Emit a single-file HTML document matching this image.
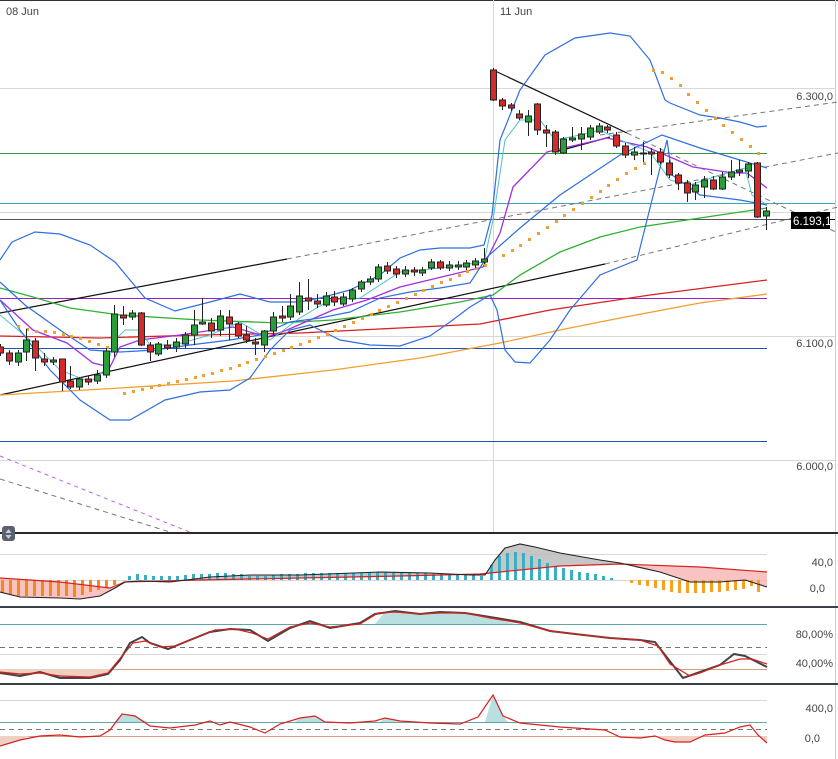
<!DOCTYPE html>
<html><head><meta charset="utf-8"><style>
html,body{margin:0;padding:0;background:#fff;}
svg{display:block;}
text{font-family:"Liberation Sans",sans-serif;font-size:11px;fill:#444;}
</style></head><body>
<svg width="838" height="759" viewBox="0 0 838 759" xmlns="http://www.w3.org/2000/svg">
<rect width="838" height="759" fill="#fff"/>
<line x1="0" y1="0.5" x2="838" y2="0.5" stroke="#333" stroke-width="1"/>
<line x1="835.5" y1="0" x2="835.5" y2="759" stroke="#ccc"/>
<!-- grid -->
<g stroke="#d8d8d8" stroke-width="1">
<line x1="0" y1="88.5" x2="835" y2="88.5"/>
<line x1="0" y1="212.5" x2="835" y2="212.5"/>
<line x1="0" y1="336.5" x2="835" y2="336.5"/>
<line x1="0" y1="460.5" x2="835" y2="460.5"/>
<line x1="493.5" y1="0" x2="493.5" y2="532"/>
</g>
<text x="6" y="15">08 Jun</text>
<text x="500" y="15">11 Jun</text>
<!-- horizontal lines -->
<line x1="0" y1="153.5" x2="767" y2="153.5" stroke="#2c9c3c"/>
<line x1="0" y1="203.5" x2="835" y2="203.5" stroke="#3aa8b0"/>
<line x1="0" y1="219.5" x2="835" y2="219.5" stroke="#555"/>
<line x1="0" y1="298.5" x2="767" y2="298.5" stroke="#9a1fd0"/>
<line x1="0" y1="348.5" x2="767" y2="348.5" stroke="#1f50c0"/>
<line x1="0" y1="441.5" x2="767" y2="441.5" stroke="#1f50c0"/>
<!-- dashed lines -->
<g stroke="#777" stroke-dasharray="5,4" fill="none">
<line x1="287" y1="259" x2="838" y2="153"/>
<line x1="605" y1="264" x2="838" y2="207"/>
<line x1="600" y1="135" x2="838" y2="102"/>
<line x1="627" y1="133" x2="838" y2="233"/>
<line x1="0" y1="479" x2="173" y2="533"/>
</g>
<line x1="0" y1="456" x2="192" y2="533" stroke="#c060e0" stroke-dasharray="4,4"/>
<!-- trend lines -->
<g stroke="#111" stroke-width="1.2" fill="none">
<line x1="0" y1="313" x2="287" y2="259"/>
<line x1="0" y1="395" x2="605" y2="264"/>
<line x1="493" y1="70" x2="627" y2="133"/>
<line x1="555" y1="152" x2="610" y2="137"/>
</g>
<!-- MAs -->
<g fill="none" stroke-width="1.3">
<polyline stroke="#f0a030" points="0,395 120,388 233,381 333,370 420,358 500,343 560,330 620,318 700,303 767,294"/>
<polyline stroke="#d82020" points="0,336 100,338 200,335 300,333 400,328 480,324 550,310 650,295 767,280"/>
<polyline stroke="#30b030" points="0,288 33,297 70,308 120,315 200,320 280,323 333,320 400,312 460,302 493,295 520,275 560,252 600,237 640,227 700,218 767,208"/>
<polyline stroke="#a030e0" points="0,300 33,330 67,343 93,363 110,367 120,347 140,340 180,335 233,327 267,337 287,330 333,310 367,300 400,287 450,275 483,267 500,233 513,187 547,152 607,138 647,147 693,167 733,173 747,173 767,188"/>
<polyline stroke="#50c0c8" stroke-width="1" points="0,315 30,340 60,370 90,382 105,370 115,340 125,330 140,330 150,345 175,345 210,335 240,322 270,340 300,318 330,300 360,298 400,272 440,268 484,262 493,220 505,140 520,120 540,120 555,140 580,135 600,130 620,140 650,152 670,180 690,185 720,175 745,168 752,195 767,205"/>
</g>
<g fill="none" stroke="#2f6fe0" stroke-width="1.2">
<polyline points="0,260 12,242 35,232 60,234 90,245 115,262 145,298 175,311 210,302 240,294 270,302 300,302 320,298 350,290 380,275 400,258 420,250 440,248 470,248 484,245 492,215 500,140 520,90 545,55 575,38 610,33 630,36 650,60 665,100 670,103 700,115 720,118 740,122 757,127 767,126"/>
<polyline points="0,282 25,305 60,330 90,350 120,352 155,350 190,345 230,340 260,335 290,322 320,318 350,312 380,298 410,292 440,288 470,283 487,257 520,228 560,195 620,155 662,135 700,148 740,160 767,168"/>
<polyline points="0,300 20,330 50,370 80,400 110,420 130,420 165,400 200,392 230,390 250,378 270,350 290,330 310,325 340,340 370,345 400,346 430,336 450,322 470,307 490,295 497,310 505,350 515,362 530,363 550,340 570,310 600,275 637,260 667,140 672,175 700,195 740,200 767,205"/>
</g>
<!-- SAR dots -->
<g fill="#f0a030">
<rect x="17" y="325" width="3" height="3"/><rect x="26" y="328" width="3" height="3"/><rect x="35" y="330" width="3" height="3"/><rect x="44" y="330" width="3" height="3"/><rect x="53" y="331" width="3" height="3"/><rect x="62" y="333" width="3" height="3"/><rect x="70" y="335" width="3" height="3"/><rect x="79" y="337" width="3" height="3"/><rect x="88" y="340" width="3" height="3"/><rect x="97" y="343" width="3" height="3"/><rect x="106" y="346" width="3" height="3"/>
<rect x="123" y="392" width="3" height="3"/><rect x="132" y="390" width="3" height="3"/><rect x="141" y="388" width="3" height="3"/><rect x="150" y="386" width="3" height="3"/><rect x="158" y="384" width="3" height="3"/><rect x="167" y="382" width="3" height="3"/><rect x="176" y="380" width="3" height="3"/><rect x="185" y="378" width="3" height="3"/><rect x="194" y="376" width="3" height="3"/><rect x="202" y="374" width="3" height="3"/><rect x="211" y="372" width="3" height="3"/><rect x="220" y="369" width="3" height="3"/><rect x="229" y="367" width="3" height="3"/><rect x="238" y="364" width="3" height="3"/><rect x="246" y="361" width="3" height="3"/><rect x="255" y="358" width="3" height="3"/><rect x="264" y="355" width="3" height="3"/><rect x="273" y="352" width="3" height="3"/><rect x="282" y="349" width="3" height="3"/><rect x="290" y="346" width="3" height="3"/><rect x="299" y="343" width="3" height="3"/><rect x="308" y="340" width="3" height="3"/><rect x="317" y="336" width="3" height="3"/><rect x="326" y="333" width="3" height="3"/><rect x="334" y="329" width="3" height="3"/><rect x="343" y="325" width="3" height="3"/><rect x="352" y="321" width="3" height="3"/><rect x="361" y="317" width="3" height="3"/><rect x="370" y="313" width="3" height="3"/><rect x="378" y="309" width="3" height="3"/><rect x="387" y="305" width="3" height="3"/><rect x="396" y="301" width="3" height="3"/><rect x="405" y="297" width="3" height="3"/><rect x="414" y="293" width="3" height="3"/><rect x="422" y="289" width="3" height="3"/><rect x="431" y="285" width="3" height="3"/><rect x="440" y="281" width="3" height="3"/><rect x="449" y="278" width="3" height="3"/><rect x="458" y="274" width="3" height="3"/><rect x="466" y="270" width="3" height="3"/><rect x="475" y="267" width="3" height="3"/><rect x="484" y="264" width="3" height="3"/>
<rect x="502" y="254" width="3" height="3"/><rect x="511" y="249" width="3" height="3"/><rect x="519" y="244" width="3" height="3"/><rect x="528" y="238" width="3" height="3"/><rect x="537" y="232" width="3" height="3"/><rect x="546" y="226" width="3" height="3"/><rect x="555" y="220" width="3" height="3"/><rect x="563" y="214" width="3" height="3"/><rect x="572" y="208" width="3" height="3"/><rect x="581" y="202" width="3" height="3"/><rect x="590" y="196" width="3" height="3"/><rect x="599" y="190" width="3" height="3"/><rect x="607" y="184" width="3" height="3"/><rect x="616" y="178" width="3" height="3"/><rect x="625" y="172" width="3" height="3"/><rect x="634" y="167" width="3" height="3"/><rect x="643" y="162" width="3" height="3"/>
<rect x="652" y="69" width="3" height="3"/><rect x="661" y="71" width="3" height="3"/><rect x="670" y="77" width="3" height="3"/><rect x="679" y="84" width="3" height="3"/><rect x="687" y="93" width="3" height="3"/><rect x="696" y="101" width="3" height="3"/><rect x="705" y="109" width="3" height="3"/><rect x="714" y="117" width="3" height="3"/><rect x="722" y="124" width="3" height="3"/><rect x="731" y="131" width="3" height="3"/><rect x="740" y="138" width="3" height="3"/><rect x="749" y="145" width="3" height="3"/><rect x="757" y="152" width="3" height="3"/>
</g>
<!-- candles -->
<g stroke="#222" stroke-width="1">
<g id="c">
<line x1="0.5" y1="344" x2="0.5" y2="356"/><rect x="-2.5" y="347" width="6" height="6" fill="#d42a2a"/>
<line x1="9.5" y1="350" x2="9.5" y2="365"/><rect x="6.5" y="353" width="6" height="8" fill="#d42a2a"/>
<line x1="18.5" y1="350" x2="18.5" y2="366"/><rect x="15.5" y="353" width="6" height="9" fill="#2a9d3a"/>
<line x1="26.5" y1="329" x2="26.5" y2="361"/><rect x="23.5" y="340" width="6" height="12" fill="#2a9d3a"/>
<line x1="35.5" y1="338" x2="35.5" y2="371"/><rect x="32.5" y="341" width="6" height="17" fill="#d42a2a"/>
<line x1="44.5" y1="353" x2="44.5" y2="366"/><rect x="41.5" y="359" width="6" height="3" fill="#d42a2a"/>
<line x1="53.5" y1="357" x2="53.5" y2="365"/><rect x="50.5" y="360" width="6" height="2" fill="#2a9d3a"/>
<line x1="62.5" y1="359" x2="62.5" y2="391"/><rect x="59.5" y="359" width="6" height="23" fill="#d42a2a"/>
<line x1="70.5" y1="366" x2="70.5" y2="389"/><rect x="67.5" y="381" width="6" height="6" fill="#d42a2a"/>
<line x1="79.5" y1="377" x2="79.5" y2="390"/><rect x="76.5" y="379" width="6" height="8" fill="#2a9d3a"/>
<line x1="88.5" y1="376" x2="88.5" y2="385"/><rect x="85.5" y="379" width="6" height="3" fill="#d42a2a"/>
<line x1="97.5" y1="370" x2="97.5" y2="384"/><rect x="94.5" y="375" width="6" height="6" fill="#2a9d3a"/>
<line x1="106.5" y1="348" x2="106.5" y2="378"/><rect x="103.5" y="351" width="6" height="24" fill="#2a9d3a"/>
<line x1="114.5" y1="305" x2="114.5" y2="357"/><rect x="111.5" y="314" width="6" height="38" fill="#2a9d3a"/>
<line x1="123.5" y1="306" x2="123.5" y2="325"/><rect x="120.5" y="315" width="6" height="3" fill="#d42a2a"/>
<line x1="132.5" y1="310" x2="132.5" y2="320"/><rect x="129.5" y="313" width="6" height="4" fill="#2a9d3a"/>
<line x1="141.5" y1="312" x2="141.5" y2="346"/><rect x="138.5" y="313" width="6" height="32" fill="#d42a2a"/>
<line x1="150.5" y1="342" x2="150.5" y2="361"/><rect x="147.5" y="345" width="6" height="7" fill="#d42a2a"/>
<line x1="158.5" y1="342" x2="158.5" y2="356"/><rect x="155.5" y="344" width="6" height="10" fill="#2a9d3a"/>
<line x1="167.5" y1="340" x2="167.5" y2="350"/><rect x="164.5" y="345" width="6" height="3" fill="#d42a2a"/>
<line x1="176.5" y1="338" x2="176.5" y2="352"/><rect x="173.5" y="342" width="6" height="5" fill="#2a9d3a"/>
<line x1="185.5" y1="332" x2="185.5" y2="348"/><rect x="182.5" y="335" width="6" height="9" fill="#2a9d3a"/>
<line x1="194.5" y1="310" x2="194.5" y2="345"/><rect x="191.5" y="325" width="6" height="10" fill="#2a9d3a"/>
<line x1="202.5" y1="298" x2="202.5" y2="325"/><rect x="199.5" y="322" width="6" height="2" fill="#2a9d3a"/>
<line x1="211.5" y1="318" x2="211.5" y2="338"/><rect x="208.5" y="323" width="6" height="8" fill="#d42a2a"/>
<line x1="220.5" y1="310" x2="220.5" y2="336"/><rect x="217.5" y="316" width="6" height="14" fill="#2a9d3a"/>
<line x1="229.5" y1="310" x2="229.5" y2="340"/><rect x="226.5" y="317" width="6" height="7" fill="#d42a2a"/>
<line x1="238.5" y1="322" x2="238.5" y2="338"/><rect x="235.5" y="324" width="6" height="12" fill="#d42a2a"/>
<line x1="246.5" y1="326" x2="246.5" y2="343"/><rect x="243.5" y="335" width="6" height="5" fill="#d42a2a"/>
<line x1="255.5" y1="338" x2="255.5" y2="355"/><rect x="252.5" y="342" width="6" height="2" fill="#d42a2a"/>
<line x1="264.5" y1="330" x2="264.5" y2="352"/><rect x="261.5" y="331" width="6" height="14" fill="#2a9d3a"/>
<line x1="273.5" y1="312" x2="273.5" y2="335"/><rect x="270.5" y="317" width="6" height="14" fill="#2a9d3a"/>
<line x1="282.5" y1="306" x2="282.5" y2="322"/><rect x="279.5" y="316" width="6" height="2" fill="#d42a2a"/>
<line x1="290.5" y1="294" x2="290.5" y2="320"/><rect x="287.5" y="306" width="6" height="11" fill="#2a9d3a"/>
<line x1="299.5" y1="282" x2="299.5" y2="315"/><rect x="296.5" y="296" width="6" height="16" fill="#2a9d3a"/>
<line x1="308.5" y1="279" x2="308.5" y2="310"/><rect x="305.5" y="298" width="6" height="3" fill="#d42a2a"/>
<line x1="317.5" y1="294" x2="317.5" y2="308"/><rect x="314.5" y="301" width="6" height="3" fill="#d42a2a"/>
<line x1="326.5" y1="292" x2="326.5" y2="307"/><rect x="323.5" y="296" width="6" height="9" fill="#2a9d3a"/>
<line x1="334.5" y1="291" x2="334.5" y2="306"/><rect x="331.5" y="297" width="6" height="5" fill="#d42a2a"/>
<line x1="343.5" y1="293" x2="343.5" y2="306"/><rect x="340.5" y="297" width="6" height="7" fill="#2a9d3a"/>
<line x1="352.5" y1="288" x2="352.5" y2="302"/><rect x="349.5" y="290" width="6" height="9" fill="#2a9d3a"/>
<line x1="361.5" y1="280" x2="361.5" y2="292"/><rect x="358.5" y="282" width="6" height="7" fill="#2a9d3a"/>
<line x1="370.5" y1="276" x2="370.5" y2="285"/><rect x="367.5" y="279" width="6" height="3" fill="#2a9d3a"/>
<line x1="378.5" y1="264" x2="378.5" y2="282"/><rect x="375.5" y="267" width="6" height="12" fill="#2a9d3a"/>
<line x1="387.5" y1="262" x2="387.5" y2="274"/><rect x="384.5" y="266" width="6" height="5" fill="#d42a2a"/>
<line x1="396.5" y1="266" x2="396.5" y2="278"/><rect x="393.5" y="269" width="6" height="5" fill="#d42a2a"/>
<line x1="405.5" y1="266" x2="405.5" y2="277"/><rect x="402.5" y="270" width="6" height="4" fill="#2a9d3a"/>
<line x1="414.5" y1="267" x2="414.5" y2="276"/><rect x="411.5" y="270" width="6" height="2" fill="#d42a2a"/>
<line x1="422.5" y1="267" x2="422.5" y2="276"/><rect x="419.5" y="270" width="6" height="3" fill="#2a9d3a"/>
<line x1="431.5" y1="259" x2="431.5" y2="270"/><rect x="428.5" y="262" width="6" height="6" fill="#2a9d3a"/>
<line x1="440.5" y1="260" x2="440.5" y2="270"/><rect x="437.5" y="262" width="6" height="6" fill="#d42a2a"/>
<line x1="449.5" y1="261" x2="449.5" y2="271"/><rect x="446.5" y="265" width="6" height="3" fill="#2a9d3a"/>
<line x1="458.5" y1="261" x2="458.5" y2="270"/><rect x="455.5" y="265" width="6" height="2" fill="#2a9d3a"/>
<line x1="466.5" y1="260" x2="466.5" y2="270"/><rect x="463.5" y="263" width="6" height="4" fill="#2a9d3a"/>
<line x1="475.5" y1="258" x2="475.5" y2="268"/><rect x="472.5" y="261" width="6" height="4" fill="#2a9d3a"/>
<line x1="484.5" y1="248" x2="484.5" y2="264"/><rect x="481.5" y="259" width="6" height="3" fill="#2a9d3a"/>
<!-- right -->
<line x1="493.5" y1="68" x2="493.5" y2="101"/><rect x="490.5" y="70" width="6" height="30" fill="#d42a2a"/>
<line x1="502.5" y1="98" x2="502.5" y2="110"/><rect x="499.5" y="100" width="6" height="6" fill="#d42a2a"/>
<line x1="511.5" y1="103" x2="511.5" y2="111"/><rect x="508.5" y="105" width="6" height="3" fill="#d42a2a"/>
<line x1="519.5" y1="110" x2="519.5" y2="120"/><rect x="516.5" y="114" width="6" height="4" fill="#d42a2a"/>
<line x1="528.5" y1="110" x2="528.5" y2="136"/><rect x="525.5" y="116" width="6" height="6" fill="#2a9d3a"/>
<line x1="537.5" y1="103" x2="537.5" y2="135"/><rect x="534.5" y="104" width="6" height="26" fill="#d42a2a"/>
<line x1="546.5" y1="125" x2="546.5" y2="147"/><rect x="543.5" y="130" width="6" height="3" fill="#d42a2a"/>
<line x1="555.5" y1="130" x2="555.5" y2="155"/><rect x="552.5" y="132" width="6" height="20" fill="#d42a2a"/>
<line x1="563.5" y1="137" x2="563.5" y2="154"/><rect x="560.5" y="139" width="6" height="14" fill="#2a9d3a"/>
<line x1="572.5" y1="127" x2="572.5" y2="142"/><rect x="569.5" y="138" width="6" height="2" fill="#2a9d3a"/>
<line x1="581.5" y1="127" x2="581.5" y2="150"/><rect x="578.5" y="134" width="6" height="5" fill="#2a9d3a"/>
<line x1="590.5" y1="125" x2="590.5" y2="140"/><rect x="587.5" y="128" width="6" height="9" fill="#2a9d3a"/>
<line x1="599.5" y1="123" x2="599.5" y2="134"/><rect x="596.5" y="126" width="6" height="6" fill="#2a9d3a"/>
<line x1="607.5" y1="125" x2="607.5" y2="133"/><rect x="604.5" y="127" width="6" height="3" fill="#d42a2a"/>
<line x1="616.5" y1="132" x2="616.5" y2="148"/><rect x="613.5" y="135" width="6" height="11" fill="#d42a2a"/>
<line x1="625.5" y1="143" x2="625.5" y2="158"/><rect x="622.5" y="146" width="6" height="9" fill="#d42a2a"/>
<line x1="634.5" y1="147" x2="634.5" y2="160"/><rect x="631.5" y="152" width="6" height="3" fill="#2a9d3a"/>
<line x1="643.5" y1="142" x2="643.5" y2="162"/><rect x="640.5" y="153" width="6" height="1" fill="#2a9d3a"/>
<line x1="651.5" y1="148" x2="651.5" y2="175"/><rect x="648.5" y="152" width="6" height="2" fill="#d42a2a"/>
<line x1="660.5" y1="148" x2="660.5" y2="164"/><rect x="657.5" y="152" width="6" height="10" fill="#d42a2a"/>
<line x1="669.5" y1="160" x2="669.5" y2="178"/><rect x="666.5" y="163" width="6" height="12" fill="#d42a2a"/>
<line x1="678.5" y1="173" x2="678.5" y2="190"/><rect x="675.5" y="175" width="6" height="8" fill="#d42a2a"/>
<line x1="687.5" y1="180" x2="687.5" y2="202"/><rect x="684.5" y="183" width="6" height="10" fill="#d42a2a"/>
<line x1="695.5" y1="182" x2="695.5" y2="200"/><rect x="692.5" y="185" width="6" height="7" fill="#2a9d3a"/>
<line x1="704.5" y1="176" x2="704.5" y2="198"/><rect x="701.5" y="180" width="6" height="7" fill="#2a9d3a"/>
<line x1="713.5" y1="176" x2="713.5" y2="190"/><rect x="710.5" y="180" width="6" height="9" fill="#d42a2a"/>
<line x1="722.5" y1="172" x2="722.5" y2="190"/><rect x="719.5" y="177" width="6" height="12" fill="#2a9d3a"/>
<line x1="731.5" y1="160" x2="731.5" y2="180"/><rect x="728.5" y="172" width="6" height="5" fill="#2a9d3a"/>
<line x1="739.5" y1="160" x2="739.5" y2="176"/><rect x="736.5" y="170" width="6" height="2" fill="#2a9d3a"/>
<line x1="748.5" y1="162" x2="748.5" y2="178"/><rect x="745.5" y="164" width="6" height="7" fill="#2a9d3a"/>
<line x1="757.5" y1="162" x2="757.5" y2="218"/><rect x="754.5" y="163" width="6" height="54" fill="#d42a2a"/>
<line x1="766.5" y1="207" x2="766.5" y2="230"/><rect x="763.5" y="211" width="6" height="5" fill="#2a9d3a"/>
</g>
</g>
<!-- price labels -->
<text x="833" y="100" text-anchor="end">6.300,0</text>
<text x="833" y="347" text-anchor="end">6.100,0</text>
<text x="833" y="470" text-anchor="end">6.000,0</text>
<rect x="791" y="212" width="39" height="17" fill="#000"/>
<text x="793" y="225" style="fill:#fff;font-size:11.5px">6.193,1</text>
<line x1="830" y1="219.5" x2="835" y2="219.5" stroke="#000"/>
<!-- separators -->
<rect x="0" y="532" width="838" height="2" fill="#2a2a2a"/>
<rect x="2" y="526" width="13" height="15" rx="3" fill="#5a6272"/>
<path d="M8.5 529 L11.5 533 L5.5 533 Z M8.5 539 L11.5 535 L5.5 535 Z" fill="#c8ccd4"/>
<rect x="0" y="606" width="838" height="2" fill="#3a4048"/>
<rect x="0" y="683" width="838" height="2" fill="#3a4048"/>
<!-- MACD panel -->
<line x1="0" y1="554.5" x2="767" y2="554.5" stroke="#d8d8d8"/>
<line x1="0" y1="580.5" x2="767" y2="580.5" stroke="#d8d8d8"/>
<text x="833" y="566" text-anchor="end">40,0</text>
<text x="825" y="592" text-anchor="end">0,0</text>
<polygon fill="#f8b8b8" opacity="0.85" points="0,578 60,582 110,588 125,582 125,580 115,588 100,596 80,599 60,598 20,597 0,592"/>
<polygon fill="#bcbcbc" opacity="0.85" points="125,582 140,581 170,582 210,577 250,575 300,575 380,572 430,573 470,575 485,575 495,560 505,548 520,544 535,547 560,553 600,560 620,563 620,564 560,566 520,570 480,574 400,576 300,578 200,580"/>
<polygon fill="#f8b8b8" opacity="0.85" points="620,563 660,572 690,582 720,582 745,580 767,587 767,572 700,567 620,564"/>
<g fill="#f08a1e">
<rect x="1" y="580" width="3" height="13"/><rect x="9" y="580" width="3" height="15"/><rect x="17" y="580" width="3" height="16"/><rect x="25" y="580" width="3" height="16"/><rect x="33" y="580" width="3" height="16"/><rect x="41" y="580" width="3" height="16"/><rect x="49" y="580" width="3" height="16"/><rect x="57" y="580" width="3" height="16"/><rect x="65" y="580" width="3" height="16"/><rect x="73" y="580" width="3" height="17"/><rect x="81" y="580" width="3" height="15"/><rect x="89" y="580" width="3" height="12"/><rect x="97" y="580" width="3" height="10"/><rect x="105" y="580" width="3" height="8"/><rect x="113" y="580" width="3" height="5"/>
</g>
<g fill="#f8a020">
<rect x="630" y="580" width="3" height="3"/><rect x="638" y="580" width="3" height="5"/><rect x="646" y="580" width="3" height="6"/><rect x="654" y="580" width="3" height="8"/><rect x="662" y="580" width="3" height="10"/><rect x="670" y="580" width="3" height="12"/><rect x="678" y="580" width="3" height="13"/><rect x="686" y="580" width="3" height="13"/><rect x="694" y="580" width="3" height="13"/><rect x="702" y="580" width="3" height="13"/><rect x="710" y="580" width="3" height="12"/><rect x="718" y="580" width="3" height="12"/><rect x="726" y="580" width="3" height="11"/><rect x="734" y="580" width="3" height="10"/><rect x="742" y="580" width="3" height="9"/><rect x="750" y="580" width="3" height="6"/><rect x="757" y="580" width="3" height="12"/>
</g>
<g fill="#38b0c4">
<rect x="128" y="576" width="3" height="4"/><rect x="136" y="574" width="3" height="6"/><rect x="144" y="575" width="3" height="5"/><rect x="152" y="576" width="3" height="4"/><rect x="160" y="576" width="3" height="4"/><rect x="168" y="576" width="3" height="4"/><rect x="176" y="576" width="3" height="4"/><rect x="184" y="575" width="3" height="5"/><rect x="192" y="574" width="3" height="6"/><rect x="200" y="574" width="3" height="6"/><rect x="208" y="574" width="3" height="6"/><rect x="216" y="573" width="3" height="7"/><rect x="224" y="573" width="3" height="7"/><rect x="232" y="574" width="3" height="6"/><rect x="240" y="574" width="3" height="6"/><rect x="248" y="576" width="3" height="4"/><rect x="256" y="576" width="3" height="4"/><rect x="264" y="576" width="3" height="4"/><rect x="272" y="575" width="3" height="5"/><rect x="280" y="574" width="3" height="6"/><rect x="288" y="574" width="3" height="6"/><rect x="296" y="574" width="3" height="6"/><rect x="304" y="573" width="3" height="7"/><rect x="312" y="573" width="3" height="7"/><rect x="320" y="573" width="3" height="7"/><rect x="328" y="573" width="3" height="7"/><rect x="336" y="573" width="3" height="7"/><rect x="344" y="573" width="3" height="7"/><rect x="352" y="573" width="3" height="7"/><rect x="360" y="573" width="3" height="7"/><rect x="368" y="572" width="3" height="8"/><rect x="376" y="572" width="3" height="8"/><rect x="384" y="572" width="3" height="8"/><rect x="392" y="572" width="3" height="8"/><rect x="400" y="572" width="3" height="8"/><rect x="408" y="573" width="3" height="7"/><rect x="416" y="573" width="3" height="7"/><rect x="424" y="573" width="3" height="7"/><rect x="432" y="574" width="3" height="6"/><rect x="440" y="574" width="3" height="6"/><rect x="448" y="575" width="3" height="5"/><rect x="456" y="575" width="3" height="5"/><rect x="464" y="575" width="3" height="5"/><rect x="472" y="575" width="3" height="5"/><rect x="480" y="576" width="3" height="4"/>
<rect x="490" y="565" width="3" height="15"/><rect x="498" y="556" width="3" height="24"/><rect x="506" y="553" width="3" height="27"/><rect x="514" y="552" width="3" height="28"/><rect x="522" y="553" width="3" height="27"/><rect x="530" y="556" width="3" height="24"/><rect x="538" y="559" width="3" height="21"/><rect x="546" y="563" width="3" height="17"/><rect x="554" y="566" width="3" height="14"/><rect x="562" y="568" width="3" height="12"/><rect x="570" y="570" width="3" height="10"/><rect x="578" y="572" width="3" height="8"/><rect x="586" y="573" width="3" height="7"/><rect x="594" y="574" width="3" height="6"/><rect x="602" y="576" width="3" height="4"/><rect x="610" y="578" width="3" height="2"/>
</g>
<polyline fill="none" stroke="#d82020" stroke-width="1.2" points="0,578 60,582 110,588 125,582 200,580 300,578 400,576 480,574 520,570 560,566 620,564 700,567 767,572"/>
<polyline fill="none" stroke="#222" stroke-width="1.1" points="0,592 20,597 60,598 80,599 100,596 115,588 125,582 140,581 170,582 210,577 250,575 300,575 380,572 430,573 470,575 485,575 495,560 505,548 520,544 535,547 560,553 600,560 620,563 660,572 690,582 720,582 745,580 767,587"/>
<!-- Stochastic panel -->
<line x1="0" y1="624.5" x2="767" y2="624.5" stroke="#5fa8a8"/>
<line x1="0" y1="647.5" x2="767" y2="647.5" stroke="#777" stroke-dasharray="5,4"/>
<line x1="0" y1="654.5" x2="767" y2="654.5" stroke="#d8d8d8"/>
<line x1="0" y1="669.5" x2="767" y2="669.5" stroke="#d8a080"/>
<text x="833" y="638" text-anchor="end">80,00%</text>
<text x="833" y="667" text-anchor="end">40,00%</text>
<polygon fill="#f0d0c0" points="0,669 0,673 20,676 40,672 60,678 90,678 108,674 114,669"/>
<polygon fill="#b8e0e0" points="375,624 385,612 395,611 420,614 440,612 465,613 490,617 515,624"/>
<polyline fill="none" stroke="#444" stroke-width="2" points="0,673 20,676 40,672 60,678 90,678 108,674 120,660 130,643 142,637 150,643 168,649 190,640 210,632 230,629 250,630 268,641 290,628 310,621 330,628 360,623 375,614 395,611 420,614 440,612 465,613 490,617 520,622 550,631 575,634 610,638 640,640 655,642 665,655 683,678 700,672 720,665 734,654 745,656 767,667"/>
<polyline fill="none" stroke="#d82020" stroke-width="1.2" points="0,672 20,674 40,673 60,676 90,677 108,673 122,656 133,643 145,641 160,647 175,646 195,638 215,630 235,629 252,633 268,639 290,627 310,623 330,627 360,624 378,613 395,612 420,614 440,613 465,613 490,618 520,623 550,631 575,634 610,638 640,640 658,646 670,664 690,676 700,673 720,665 740,659 752,659 767,664"/>
<!-- CCI panel -->
<line x1="0" y1="700.5" x2="767" y2="700.5" stroke="#d8d8d8"/>
<line x1="0" y1="722.5" x2="767" y2="722.5" stroke="#5fa8a8"/>
<line x1="0" y1="729.5" x2="767" y2="729.5" stroke="#777" stroke-dasharray="5,4"/>
<line x1="0" y1="736.5" x2="767" y2="736.5" stroke="#d8a080"/>
<text x="833" y="712" text-anchor="end">400,0</text>
<text x="820" y="742" text-anchor="end">0,0</text>
<g fill="#b8e0e0">
<polygon points="114,722 122,714 135,716 148,722"/>
<polygon points="295,722 300,718 315,716 325,722"/>
<polygon points="380,722 385,718 400,722"/>
<polygon points="485,722 493,695 503,716 508,722"/>
</g>
<g fill="#f0d0c0">
<polygon points="0,736 0,746 20,740 30,736"/>
<polygon points="618,736 620,737 640,738 655,736 665,740 675,742 690,742 703,736"/>
<polygon points="755,736 758,735 767,743 767,736"/>
</g>
<polyline fill="none" stroke="#d82020" stroke-width="1.2" points="0,746 20,740 40,736 60,735 80,737 100,736 110,730 122,714 135,716 150,726 170,728 195,725 210,721 220,725 230,722 250,727 265,733 280,724 300,718 315,716 325,722 350,723 375,721 385,718 400,721 430,723 460,724 478,717 493,695 503,716 520,723 560,727 590,729 605,730 620,737 640,738 655,736 665,740 675,742 690,742 705,735 725,733 740,727 750,725 758,735 767,743"/>
</svg>
</body></html>
